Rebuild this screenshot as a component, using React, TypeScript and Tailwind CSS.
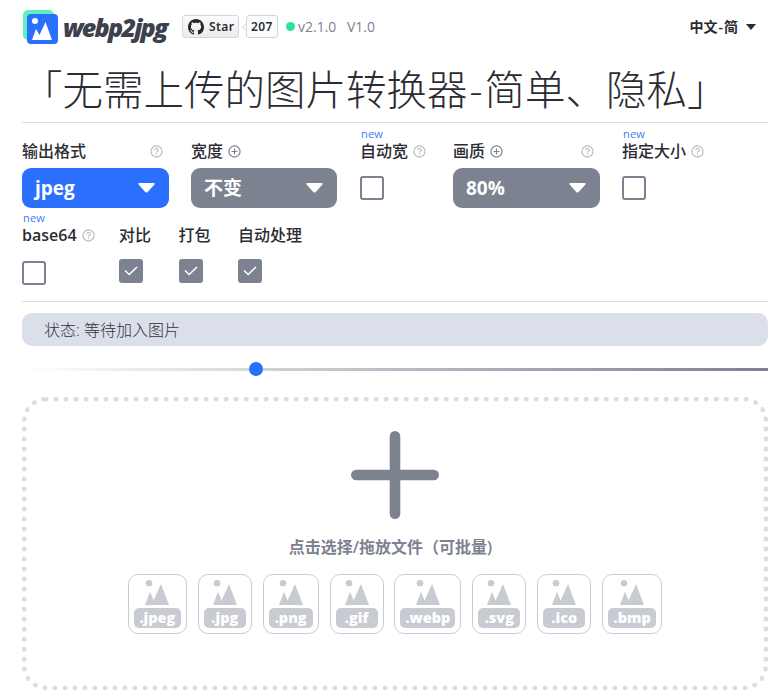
import React from "react";

const ui = "font-['Open_Sans','Noto_Sans_CJK_SC',sans-serif]";

function Mountains({ className }: { className: string }) {
  return (
    <svg viewBox="0 0 24 25" className={className} fill="currentColor">
      <circle cx="4" cy="3.2" r="3.3" />
      <path d="M0 25 5 11.8 8.6 20.5 16 4 24 25Z" />
    </svg>
  );
}

function Help() {
  return (
    <svg viewBox="0 0 14 14" className="h-[13px] w-[13px] shrink-0 text-[#b4b7bf]" fill="none" stroke="currentColor" strokeWidth="1.2">
      <circle cx="7" cy="7" r="6" />
      <path d="M5.1 5.6c0-2.4 3.8-2.4 3.8-.1 0 1.4-1.9 1.4-1.9 2.8M7 9.4v1.3" />
    </svg>
  );
}

function Plus() {
  return (
    <svg viewBox="0 0 14 14" className="h-[13px] w-[13px] shrink-0 text-[#7c8290]" fill="none" stroke="currentColor" strokeWidth="1.3">
      <circle cx="7" cy="7" r="6" />
      <path d="M7 3.8v6.4M3.8 7h6.4" />
    </svg>
  );
}

type FieldProps = {
  label: string;
  width: string;
  isNew?: boolean;
  plus?: boolean;
  help?: boolean;
  spread?: boolean;
  children: React.ReactNode;
};

function Field({ label, width, isNew, plus, help, spread, children }: FieldProps) {
  return (
    <div className={`flex shrink-0 flex-col ${width}`}>
      <div className="h-[10px] pl-px text-[11px] leading-[10px] tracking-[0.2px] text-[#3b7cf5]">{isNew ? "new" : ""}</div>
      <div className={`flex h-6 items-center whitespace-nowrap text-base leading-6 text-[#2b2c33] ${label === "base64" ? "font-semibold" : "font-medium"} ${spread ? "justify-between pr-[6px]" : "gap-[5px]"}`}>
        <span className="flex items-center gap-[5px]">
          {label}
          {plus && <Plus />}
        </span>
        {help && <Help />}
      </div>
      {children}
    </div>
  );
}

function Select({ value, color }: { value: string; color: string }) {
  return (
    <div className={`mt-[5px] flex h-10 items-center justify-between rounded-[9px] pr-[14px] pl-[13px] text-[19px] font-bold text-white ${color}`}>
      <span>{value}</span>
      <svg viewBox="0 0 17 10" className="h-[10px] w-[17px]" fill="currentColor">
        <path d="M1.5 0h14q2 .2.7 1.7L9.7 9q-1.2 1.1-2.4 0L.8 1.7Q-.5.2 1.5 0Z" />
      </svg>
    </div>
  );
}

function Check({ on, top }: { on?: boolean; top: string }) {
  return (
    <div className={`flex h-6 w-6 items-center justify-center rounded-[3px] border-2 border-[#7c8290] ${top} ${on ? "bg-[#7c8290]" : "bg-white"}`}>
      {on && (
        <svg viewBox="0 0 14 10" className="h-[10px] w-[14px]" fill="none" stroke="white" strokeWidth="1.6">
          <path d="m1 4.5 4.2 4L13 1" />
        </svg>
      )}
    </div>
  );
}

const formats = [
  { name: ".jpeg", width: "w-[59px]" },
  { name: ".jpg", width: "w-[54px]" },
  { name: ".png", width: "w-[56px]" },
  { name: ".gif", width: "w-[54px]" },
  { name: ".webp", width: "w-[67px]" },
  { name: ".svg", width: "w-[54px]" },
  { name: ".ico", width: "w-[54px]" },
  { name: ".bmp", width: "w-[60px]" },
];

export default function App() {
  return (
    <div className={`h-[692px] w-[782px] overflow-hidden bg-white pr-[14px] pl-[22px] ${ui}`}>
      <header className="flex h-[53px] items-center">
        <svg viewBox="0 0 36 36" className="h-9 w-9">
          <rect x="1" y="1" width="31" height="30" rx="5" fill="#5df2bd" />
          <rect x="5" y="5" width="31" height="30" rx="4" fill="#2b6fff" />
          <circle cx="13" cy="12" r="3" fill="white" />
          <path d="M10 31 14 20 17.5 26 23.5 13 30 31Z" fill="white" />
        </svg>
        <div className="ml-[5px] w-[106px] text-[25px] leading-[30px] font-extrabold tracking-[-1.75px] whitespace-nowrap text-[#3d414d] italic">webp2jpg</div>
        <div className="ml-[13px] flex h-[23px] w-[57px] items-center gap-[5px] rounded-[3px] border border-[#d3d5d8] bg-linear-to-b from-[#fcfcfc] to-[#ebebed] pl-[5px] font-['Noto_Sans',sans-serif] text-xs font-semibold tracking-[0.4px] text-[#2b2d33]">
          <svg viewBox="0 0 16 16" className="h-4 w-4 shrink-0" fill="#24292e">
            <path d="M8 0C3.58 0 0 3.58 0 8c0 3.54 2.29 6.53 5.47 7.59.4.07.55-.17.55-.38 0-.19-.01-.82-.01-1.49-2.01.37-2.53-.49-2.69-.94-.09-.23-.48-.94-.82-1.13-.28-.15-.68-.52-.01-.53.63-.01 1.08.58 1.23.82.72 1.21 1.87.87 2.33.66.07-.52.28-.87.51-1.07-1.78-.2-3.64-.89-3.64-3.95 0-.87.31-1.59.82-2.15-.08-.2-.36-1.02.08-2.12 0 0 .67-.21 2.2.82.64-.18 1.32-.27 2-.27s1.36.09 2 .27c1.53-1.04 2.2-.82 2.2-.82.44 1.1.16 1.92.08 2.12.51.56.82 1.27.82 2.15 0 3.07-1.87 3.75-3.65 3.95.29.25.54.73.54 1.48 0 1.07-.01 1.93-.01 2.2 0 .21.15.46.55.38A8.01 8.01 0 0 0 16 8c0-4.42-3.58-8-8-8Z" />
          </svg>
          Star
        </div>
        <svg viewBox="0 0 5 10" className="ml-[3px] h-[10px] w-[5px]" fill="white" stroke="#d3d5d8">
          <path d="M5 .5.7 5 5 9.5" />
        </svg>
        <div className="-ml-px flex h-[23px] w-8 items-center justify-center rounded-[3px] border border-[#d3d5d8] bg-[#fcfcfc] font-['Noto_Sans',sans-serif] text-xs font-semibold tracking-[0.4px] text-[#2b2d33]">207</div>
        <span className="ml-[8px] h-[9px] w-[9px] rounded-full bg-[#2fdf9a]" />
        <span className="ml-[3px] w-[49px] text-sm whitespace-nowrap text-[#7c8290]">v2.1.0</span>
        <span className="text-sm text-[#7c8290]">V1.0</span>
        <span className="ml-auto flex text-sm font-semibold text-[#2b2c33]">
          中文<span className="mx-px">-</span>简
        </span>
        <svg viewBox="0 0 10 6" className="mr-[12px] ml-[8px] h-[6px] w-[10px]" fill="#2b2c33">
          <path d="M0 0h10L5 6Z" />
        </svg>
      </header>

      <h1 className="h-[70px] border-b border-[#dcdde0] text-[40.5px] leading-[73px] font-light whitespace-nowrap text-[#2b2c33]">
        「无需上传的图片转换器<span className="mx-[2px]">-</span>简单、隐私」
      </h1>

      <section className="flex h-[179px] flex-wrap content-start gap-x-[22px] border-b border-[#dcdde0] pt-[6px]">
        <div className="flex h-[85px] w-full gap-[22px]">
          <Field label="输出格式" width="w-[147px]" help spread>
            <Select value="jpeg" color="bg-[#2b6fff]" />
          </Field>
          <Field label="宽度" width="w-[147px]" plus>
            <div className="w-[146px]">
              <Select value="不变" color="bg-[#7c8290]" />
            </div>
          </Field>
          <Field label="自动宽" width="w-[71px]" isNew help>
            <Check top="mt-[13px]" />
          </Field>
          <Field label="画质" width="w-[147px]" plus help spread>
            <Select value="80%" color="bg-[#7c8290]" />
          </Field>
          <Field label="指定大小" width="w-[90px]" isNew help>
            <Check top="mt-[13px]" />
          </Field>
        </div>
        <div className="-mt-px flex w-full">
          <Field label="base64" width="w-[97px]" isNew help>
            <Check top="mt-[14px]" />
          </Field>
          <Field label="对比" width="w-[59.5px]">
            <Check on top="mt-[12px]" />
          </Field>
          <Field label="打包" width="w-[59.5px]">
            <Check on top="mt-[12px]" />
          </Field>
          <Field label="自动处理" width="w-[70px]">
            <Check on top="mt-[12px]" />
          </Field>
        </div>
      </section>

      <div className="mt-[11px] h-[33px] rounded-[10px] bg-[#dbdfe9] pl-[22px] text-base leading-[35px] font-light text-[#2f323b]">状态: 等待加入图片</div>

      <div className="mt-[16px] flex h-[14px] items-center">
        <div className="h-[3px] w-[227px] bg-linear-to-r from-white to-[#d7d8dc]" />
        <div className="h-[14px] w-[14px] shrink-0 rounded-full bg-[#2b6fff]" />
        <div className="h-[3px] flex-1 bg-linear-to-r from-[#d0d2d8] to-[#7c8290]" />
      </div>

      <main className="mt-[21px] flex h-[293px] flex-col items-center rounded-[24px] border-[5px] border-dotted border-[#dbdde6] pt-[29px]">
        <svg viewBox="0 0 88 88" className="h-[88px] w-[88px]" fill="none" stroke="#7c8290" strokeWidth="10.6" strokeLinecap="round">
          <path d="M44 5.3v77.4M5.3 44h77.4" />
        </svg>
        <p className="mt-[16px] mr-[9px] h-6 text-base leading-6 font-semibold whitespace-nowrap text-[#7c8290]">点击选择/拖放文件（可批量)</p>
        <div className="mt-[15px] flex gap-[10.9px]">
          {formats.map(({ name, width }) => (
            <div key={name} className={`flex h-[60px] flex-col items-center rounded-[10px] border border-[#c9cbd3] pt-[5px] text-[#c9cbd3] ${width}`}>
              <Mountains className="h-[25px] w-[24px]" />
              <div className="mt-[3px] flex h-[20px] w-[calc(100%-10px)] items-center justify-center rounded-[5px] bg-[#c9cbd3] text-[14.5px] leading-5 font-extrabold text-white">{name}</div>
            </div>
          ))}
        </div>
      </main>
    </div>
  );
}
